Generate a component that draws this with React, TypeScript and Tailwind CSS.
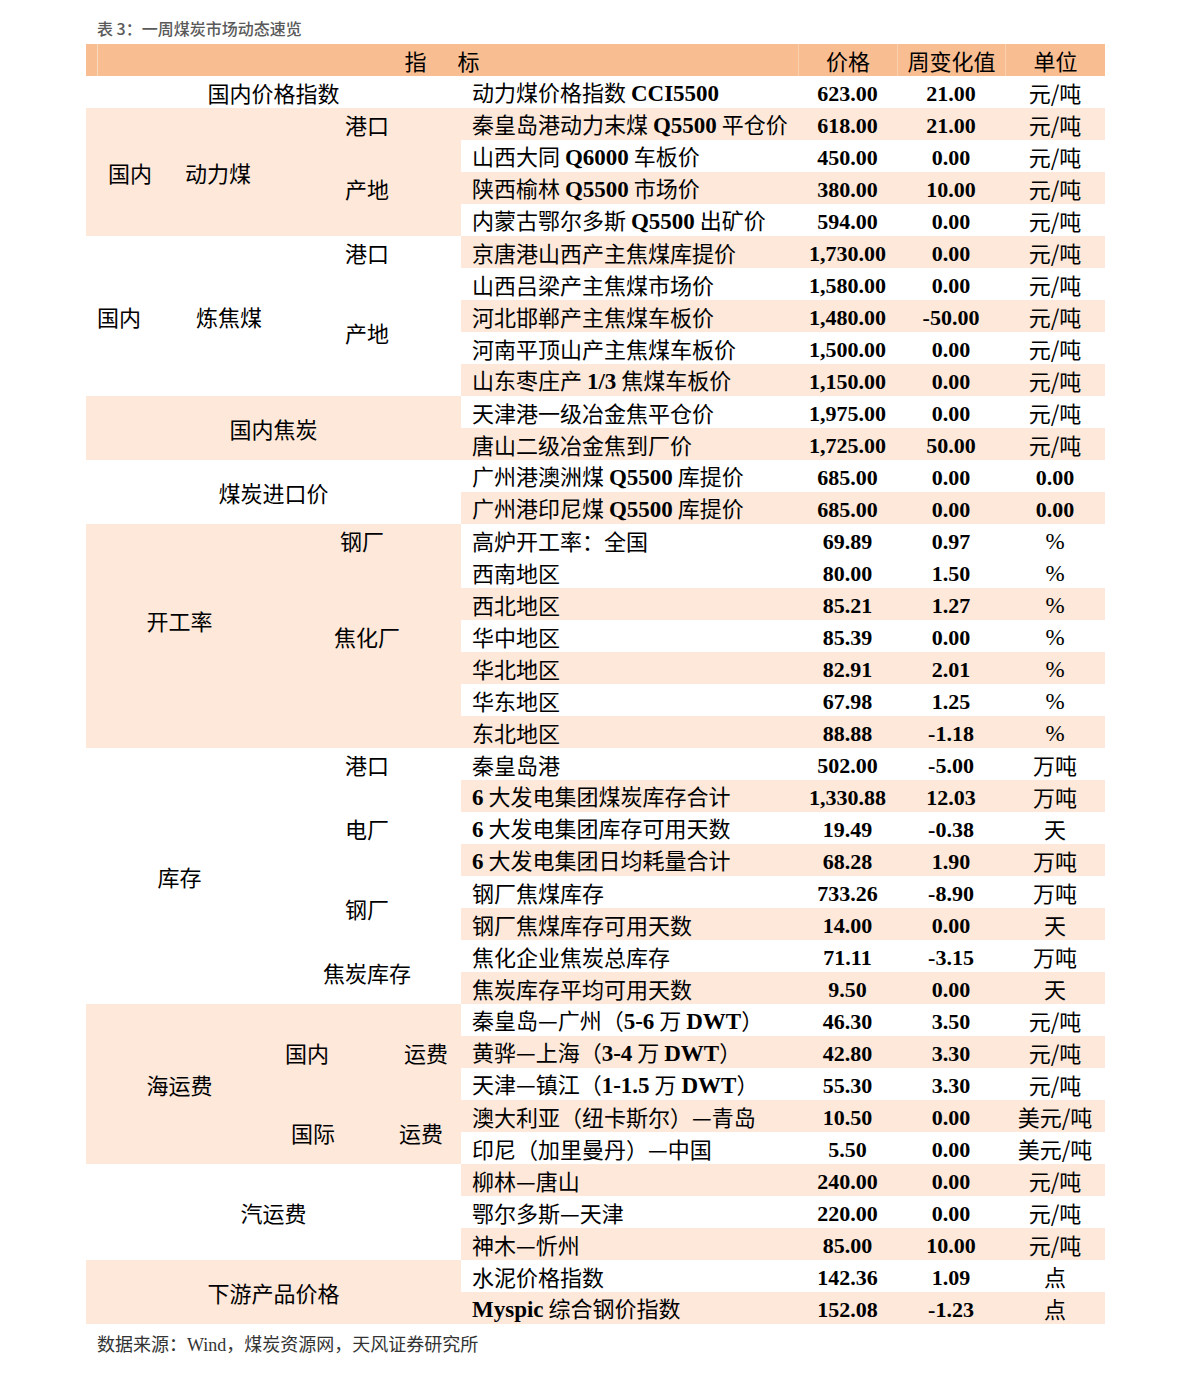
import React from 'react';

type Row = {
    name: string;
    price: string;
    change: string;
    unit: string;
};

const rows: Row[] = [
    { name: '动力煤价格指数 CCI5500', price: '623.00', change: '21.00', unit: '元/吨' },
    { name: '秦皇岛港动力末煤 Q5500 平仓价', price: '618.00', change: '21.00', unit: '元/吨' },
    { name: '山西大同 Q6000 车板价', price: '450.00', change: '0.00', unit: '元/吨' },
    { name: '陕西榆林 Q5500 市场价', price: '380.00', change: '10.00', unit: '元/吨' },
    { name: '内蒙古鄂尔多斯 Q5500 出矿价', price: '594.00', change: '0.00', unit: '元/吨' },
    { name: '京唐港山西产主焦煤库提价', price: '1,730.00', change: '0.00', unit: '元/吨' },
    { name: '山西吕梁产主焦煤市场价', price: '1,580.00', change: '0.00', unit: '元/吨' },
    { name: '河北邯郸产主焦煤车板价', price: '1,480.00', change: '-50.00', unit: '元/吨' },
    { name: '河南平顶山产主焦煤车板价', price: '1,500.00', change: '0.00', unit: '元/吨' },
    { name: '山东枣庄产 1/3 焦煤车板价', price: '1,150.00', change: '0.00', unit: '元/吨' },
    { name: '天津港一级冶金焦平仓价', price: '1,975.00', change: '0.00', unit: '元/吨' },
    { name: '唐山二级冶金焦到厂价', price: '1,725.00', change: '50.00', unit: '元/吨' },
    { name: '广州港澳洲煤 Q5500 库提价', price: '685.00', change: '0.00', unit: '0.00' },
    { name: '广州港印尼煤 Q5500 库提价', price: '685.00', change: '0.00', unit: '0.00' },
    { name: '高炉开工率：全国', price: '69.89', change: '0.97', unit: '%' },
    { name: '西南地区', price: '80.00', change: '1.50', unit: '%' },
    { name: '西北地区', price: '85.21', change: '1.27', unit: '%' },
    { name: '华中地区', price: '85.39', change: '0.00', unit: '%' },
    { name: '华北地区', price: '82.91', change: '2.01', unit: '%' },
    { name: '华东地区', price: '67.98', change: '1.25', unit: '%' },
    { name: '东北地区', price: '88.88', change: '-1.18', unit: '%' },
    { name: '秦皇岛港', price: '502.00', change: '-5.00', unit: '万吨' },
    { name: '6 大发电集团煤炭库存合计', price: '1,330.88', change: '12.03', unit: '万吨' },
    { name: '6 大发电集团库存可用天数', price: '19.49', change: '-0.38', unit: '天' },
    { name: '6 大发电集团日均耗量合计', price: '68.28', change: '1.90', unit: '万吨' },
    { name: '钢厂焦煤库存', price: '733.26', change: '-8.90', unit: '万吨' },
    { name: '钢厂焦煤库存可用天数', price: '14.00', change: '0.00', unit: '天' },
    { name: '焦化企业焦炭总库存', price: '71.11', change: '-3.15', unit: '万吨' },
    { name: '焦炭库存平均可用天数', price: '9.50', change: '0.00', unit: '天' },
    { name: '秦皇岛—广州（5-6 万 DWT）', price: '46.30', change: '3.50', unit: '元/吨' },
    { name: '黄骅—上海（3-4 万 DWT）', price: '42.80', change: '3.30', unit: '元/吨' },
    { name: '天津—镇江（1-1.5 万 DWT）', price: '55.30', change: '3.30', unit: '元/吨' },
    { name: '澳大利亚（纽卡斯尔）—青岛', price: '10.50', change: '0.00', unit: '美元/吨' },
    { name: '印尼（加里曼丹）—中国', price: '5.50', change: '0.00', unit: '美元/吨' },
    { name: '柳林—唐山', price: '240.00', change: '0.00', unit: '元/吨' },
    { name: '鄂尔多斯—天津', price: '220.00', change: '0.00', unit: '元/吨' },
    { name: '神木—忻州', price: '85.00', change: '10.00', unit: '元/吨' },
    { name: '水泥价格指数', price: '142.36', change: '1.09', unit: '点' },
    { name: 'Myspic 综合钢价指数', price: '152.08', change: '-1.23', unit: '点' },
];

// left side merged cells, grid row 1 is the header
type Group = {
    cls: string;
    peach: boolean;
    content: React.ReactNode;
};

const groups: Group[] = [
    { cls: 'col-start-1 col-span-2 row-start-2 row-span-1', peach: false, content: '国内价格指数' },
    {
        cls: 'col-start-1 col-span-1 row-start-3 row-span-4',
        peach: true,
        content: (
            <div className="w-full flex justify-between px-[22px]">
                <span>国内</span>
                <span>动力煤</span>
            </div>
        ),
    },
    { cls: 'col-start-2 col-span-1 row-start-3 row-span-1', peach: true, content: '港口' },
    { cls: 'col-start-2 col-span-1 row-start-4 row-span-3', peach: true, content: '产地' },
    {
        cls: 'col-start-1 col-span-1 row-start-7 row-span-5',
        peach: false,
        content: (
            <div className="w-full flex justify-between px-[11px]">
                <span>国内</span>
                <span>炼焦煤</span>
            </div>
        ),
    },
    { cls: 'col-start-2 col-span-1 row-start-7 row-span-1', peach: false, content: '港口' },
    { cls: 'col-start-2 col-span-1 row-start-8 row-span-4', peach: false, content: '产地' },
    { cls: 'col-start-1 col-span-2 row-start-12 row-span-2', peach: true, content: '国内焦炭' },
    { cls: 'col-start-1 col-span-2 row-start-14 row-span-2', peach: false, content: '煤炭进口价' },
    { cls: 'col-start-1 col-span-1 row-start-16 row-span-7 pb-8', peach: true, content: '开工率' },
    { cls: 'col-start-2 col-span-1 row-start-16 row-span-1 pr-[10px]', peach: true, content: '钢厂' },
    { cls: 'col-start-2 col-span-1 row-start-17 row-span-6 pb-8', peach: true, content: '焦化厂' },
    { cls: 'col-start-1 col-span-1 row-start-23 row-span-8', peach: false, content: '库存' },
    { cls: 'col-start-2 col-span-1 row-start-23 row-span-1', peach: false, content: '港口' },
    { cls: 'col-start-2 col-span-1 row-start-24 row-span-3', peach: false, content: '电厂' },
    { cls: 'col-start-2 col-span-1 row-start-27 row-span-2', peach: false, content: '钢厂' },
    { cls: 'col-start-2 col-span-1 row-start-29 row-span-2', peach: false, content: '焦炭库存' },
    { cls: 'col-start-1 col-span-1 row-start-31 row-span-5', peach: true, content: '海运费' },
    {
        cls: 'col-start-2 col-span-1 row-start-31 row-span-3',
        peach: true,
        content: (
            <div className="w-full flex justify-between pl-[12px] pr-[13px]">
                <span>国内</span>
                <span>运费</span>
            </div>
        ),
    },
    {
        cls: 'col-start-2 col-span-1 row-start-34 row-span-2',
        peach: true,
        content: (
            <div className="w-full flex justify-between pl-[18px] pr-[18px]">
                <span>国际</span>
                <span>运费</span>
            </div>
        ),
    },
    { cls: 'col-start-1 col-span-2 row-start-36 row-span-3', peach: false, content: '汽运费' },
    { cls: 'col-start-1 col-span-2 row-start-39 row-span-2', peach: true, content: '下游产品价格' },
];

const isPeach = (i: number) => {
    const n = i + 1;
    if (n <= 14) return n % 2 === 0;
    if (n === 15) return false;
    return n % 2 === 1;
};

// ascii runs are set in bold Times, the rest in the CJK sans
const Name = ({ text }: { text: string }) => {
    const parts = text.split(/([A-Za-z0-9][A-Za-z0-9./\-]*)/);
    return (
        <span className="whitespace-pre">
            {parts.map((p, k) =>
                /^[A-Za-z0-9]/.test(p) ? (
                    <span key={k} className="font-['Liberation_Serif',serif] font-bold text-[23px]">
                        {p}
                    </span>
                ) : (
                    <span key={k}>{p}</span>
                )
            )}
        </span>
    );
};

const Unit = ({ text }: { text: string }) => {
    if (text === '%') return <span className="font-['Liberation_Serif',serif] text-[23px] pt-[3px]">%</span>;
    if (/^[0-9]/.test(text))
        return <span className="font-['Liberation_Serif',serif] font-bold pt-[3px]">{text}</span>;
    return <span>{text}</span>;
};

export default function App() {
    return (
        <div className="w-[1191px] h-[1374px] bg-white text-black font-['Noto_Sans_CJK_SC','Noto_Sans',sans-serif]">
            <div className="pt-[18px] pl-[97px] h-[44px] text-[16px] leading-[20px] text-[#5a5a5a] font-medium">
                表 3：一周煤炭市场动态速览
            </div>

            <div className="ml-[86px] w-[1019px] grid grid-cols-[187px_188px_337px_99px_108px_100px] auto-rows-[32px] text-[22px] leading-none">
                {/* header */}
                <div className="col-start-1 col-span-3 row-start-1 bg-[#f8be92] flex items-center justify-center border-l-[11px] border-l-[#f8be92] relative">
                    <span className="absolute left-0 top-0 bottom-0 w-px bg-[#fbd9bf]" />
                    <span className="pr-[11px] flex">
                        <span>指</span>
                        <span className="ml-[31px]">标</span>
                    </span>
                </div>
                <div className="col-start-4 row-start-1 bg-[#f8be92] flex items-center justify-center border-l border-[#fbd0ae]">
                    价格
                </div>
                <div className="col-start-5 row-start-1 bg-[#f8be92] flex items-center justify-center border-l border-[#fbd0ae]">
                    周变化值
                </div>
                <div className="col-start-6 row-start-1 bg-[#f8be92] flex items-center justify-center border-l border-[#fbd0ae]">
                    单位
                </div>

                {/* left merged labels */}
                {groups.map((g, i) => (
                    <div
                        key={i}
                        className={`${g.cls} ${g.peach ? 'bg-[#fde8da]' : 'bg-white'} flex items-center justify-center`}
                    >
                        {g.content}
                    </div>
                ))}

                {/* data rows */}
                {rows.map((r, i) => {
                    const bg = isPeach(i) ? 'bg-[#fde8da]' : 'bg-white';
                    return (
                        <React.Fragment key={i}>
                            <div className={`col-start-3 ${bg} flex items-center pl-[11px] whitespace-nowrap`}>
                                <Name text={r.name} />
                            </div>
                            <div className={`col-start-4 ${bg} flex items-center justify-center pt-[3px] font-['Liberation_Serif',serif] font-bold`}>
                                {r.price}
                            </div>
                            <div className={`col-start-5 ${bg} flex items-center justify-center pt-[3px] font-['Liberation_Serif',serif] font-bold`}>
                                {r.change}
                            </div>
                            <div className={`col-start-6 ${bg} flex items-center justify-center`}>
                                <Unit text={r.unit} />
                            </div>
                        </React.Fragment>
                    );
                })}
            </div>

            <div className="pl-[97px] pt-[8px] text-[18px] leading-[22px] text-[#333]">
                数据来源：<span className="font-['Liberation_Serif',serif]">Wind</span>，煤炭资源网，天风证券研究所
            </div>
        </div>
    );
}
